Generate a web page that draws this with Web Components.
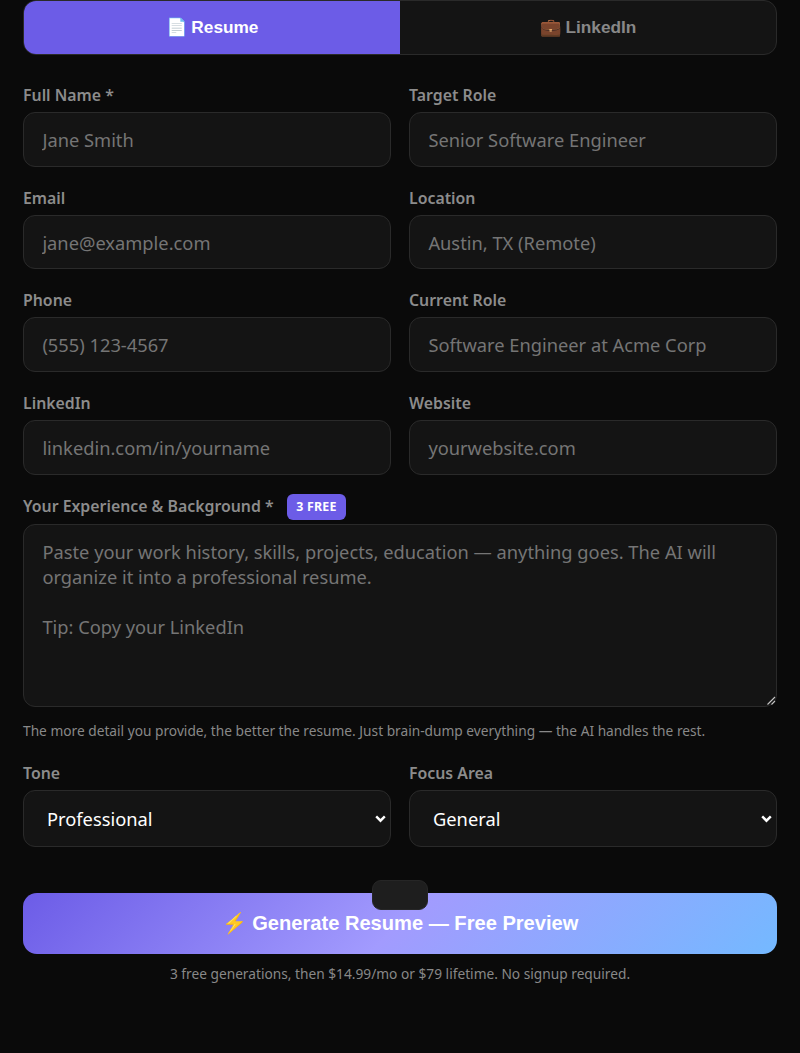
<!DOCTYPE html>
<html lang="en"><head><meta charset="utf-8"><title>Resume</title>
<style>
:root{color-scheme:dark}
html,body{margin:0;background:#0a0a0a}
body{font-family:"Noto Sans",sans-serif;color:#888}
</style></head><body>
<resume-app></resume-app>
<script>
const tpl=(html)=>{const t=document.createElement('template');t.innerHTML=html;return t};
class Base extends HTMLElement{constructor(){super();this.attachShadow({mode:'open'}).appendChild(this.constructor.t.content.cloneNode(true))}}
const fieldCss=`box-sizing:border-box;width:100%;background:#141414;border:1px solid #2a2a2a;border-radius:12px;font:400 18.3px/25px "Noto Sans",sans-serif;outline:none;color:#fff`;

class TabBar extends Base{static t=tpl(`<style>
:host{display:flex;height:55px;box-sizing:border-box;border:1px solid #2a2a2a;border-radius:13px;background:#141414;overflow:hidden}
button{flex:1;border:0;background:transparent;color:#888;font:700 17.25px "Liberation Sans",sans-serif;padding:0;margin:0}
button.on{background:#6c5ce7;color:#fff}
</style><button class="on" type="button">📄 Resume</button><button type="button">💼 LinkedIn</button>`)}

class FormField extends Base{static t=tpl(`<style>
:host{display:block;min-width:0}
label{display:flex;align-items:center;gap:13px;min-height:25.76px;margin-bottom:3.4px;padding-top:.4px;font:600 15.85px/25.76px "Noto Sans",sans-serif;color:#8c8c8c}
</style><label><span id="l"></span><slot name="badge"></slot></label><slot></slot>`);
connectedCallback(){this.shadowRoot.getElementById('l').textContent=this.getAttribute('label')}}

class TextBox extends Base{static t=tpl(`<style>
:host{display:block}
input{${fieldCss};display:block;height:54.7px;padding:0 18.4px}
input::placeholder{color:#757575;opacity:1}
</style><input type="text">`);
connectedCallback(){this.shadowRoot.querySelector('input').placeholder=this.getAttribute('placeholder')}}

class TextArea extends Base{static t=tpl(`<style>
:host{display:block}
textarea{${fieldCss};display:block;height:183px;padding:14px 18.4px;resize:vertical}
textarea::placeholder{color:#757575;opacity:1}
textarea::-webkit-resizer{background:url("data:image/svg+xml,%3Csvg xmlns='http://www.w3.org/2000/svg' width='15' height='15'%3E%3Cpath d='M6.5 13.5 14 6M10.5 13.5 14 10' stroke='%23c4c4c4' stroke-width='1.1' fill='none'/%3E%3C/svg%3E") no-repeat}
</style><textarea></textarea>`);
connectedCallback(){this.shadowRoot.querySelector('textarea').placeholder=this.getAttribute('placeholder')}}

class SelectBox extends Base{static t=tpl(`<style>
:host{display:block;position:relative}
select{${fieldCss};display:block;height:57px;padding:0 18.4px 0 23px;appearance:none;-webkit-appearance:none}
svg{position:absolute;right:5px;top:24.5px;width:11px;height:8px;pointer-events:none}
</style><select></select><svg viewBox="0 0 11 8" aria-hidden="true"><path d="M1.2 1.4 5.5 5.7 9.8 1.4" fill="none" stroke="#fff" stroke-width="2.4"/></svg>`);
connectedCallback(){const o=document.createElement('option');o.textContent=this.getAttribute('value');this.shadowRoot.querySelector('select').append(o)}}

class FreeBadge extends Base{static t=tpl(`<style>
:host{display:inline-flex;align-items:center;height:26px;margin:1px 0;padding:0 9.6px;border-radius:6px;background:#6c5ce7;color:#fff;font:700 12.4px "Noto Sans",sans-serif;letter-spacing:.2px}
</style><slot></slot>`)}

class GenerateButton extends Base{static t=tpl(`<style>
:host{display:block;position:relative}
button{display:block;width:100%;height:61.5px;border:0;border-radius:14px;background:linear-gradient(135deg,#6c5ce7,#a29bfe 50%,#74b9ff);color:#fff;font:700 20.1px "Liberation Sans",sans-serif;padding:0}
.chip{position:absolute;left:348.7px;top:-12.5px;width:56.6px;height:30px;box-sizing:border-box;border-radius:9px;background:#1e1e1e;border:1px solid #262626}
</style><button type="button"><slot></slot></button><div class="chip"></div>`)}

class ResumeApp extends Base{static t=tpl(`<style>
:host{display:block;padding:0 23px;min-height:1053px;box-sizing:border-box}
.grid{display:grid;grid-template-columns:1fr 1fr;column-gap:18px;row-gap:18.4px}
.mt{margin-top:27.6px}
.span{grid-column:1/-1;margin-top:-.8px}
.hint{font-size:13.72px;line-height:20px;color:#888;margin-top:14.4px}
.tone{margin-top:19px}
generate-button{margin-top:45.5px}
.foot{margin-top:10px;text-align:center;font-size:13.72px;line-height:20px;color:#888}
</style>
<tab-bar></tab-bar>
<div class="grid mt">
<form-field label="Full Name *"><text-box placeholder="Jane Smith"></text-box></form-field>
<form-field label="Target Role"><text-box placeholder="Senior Software Engineer"></text-box></form-field>
<form-field label="Email"><text-box placeholder="jane@example.com"></text-box></form-field>
<form-field label="Location"><text-box placeholder="Austin, TX (Remote)"></text-box></form-field>
<form-field label="Phone"><text-box placeholder="(555) 123-4567"></text-box></form-field>
<form-field label="Current Role"><text-box placeholder="Software Engineer at Acme Corp"></text-box></form-field>
<form-field label="LinkedIn"><text-box placeholder="linkedin.com/in/yourname"></text-box></form-field>
<form-field label="Website"><text-box placeholder="yourwebsite.com"></text-box></form-field>
<form-field class="span" label="Your Experience &amp; Background *"><free-badge slot="badge">3 FREE</free-badge>
<text-area placeholder="Paste your work history, skills, projects, education — anything goes. The AI will organize it into a professional resume.

Tip: Copy your LinkedIn"></text-area></form-field>
</div>
<div class="hint">The more detail you provide, the better the resume. Just brain-dump everything — the AI handles the rest.</div>
<div class="grid tone">
<form-field label="Tone"><select-box value="Professional"></select-box></form-field>
<form-field label="Focus Area"><select-box value="General"></select-box></form-field>
</div>
<generate-button>⚡ Generate Resume — Free Preview</generate-button>
<div class="foot">3 free generations, then $14.99/mo or $79 lifetime. No signup required.</div>`)}

for(const [n,c] of Object.entries({'tab-bar':TabBar,'form-field':FormField,'text-box':TextBox,'text-area':TextArea,'select-box':SelectBox,'free-badge':FreeBadge,'generate-button':GenerateButton,'resume-app':ResumeApp}))customElements.define(n,c);
</script></body></html>
